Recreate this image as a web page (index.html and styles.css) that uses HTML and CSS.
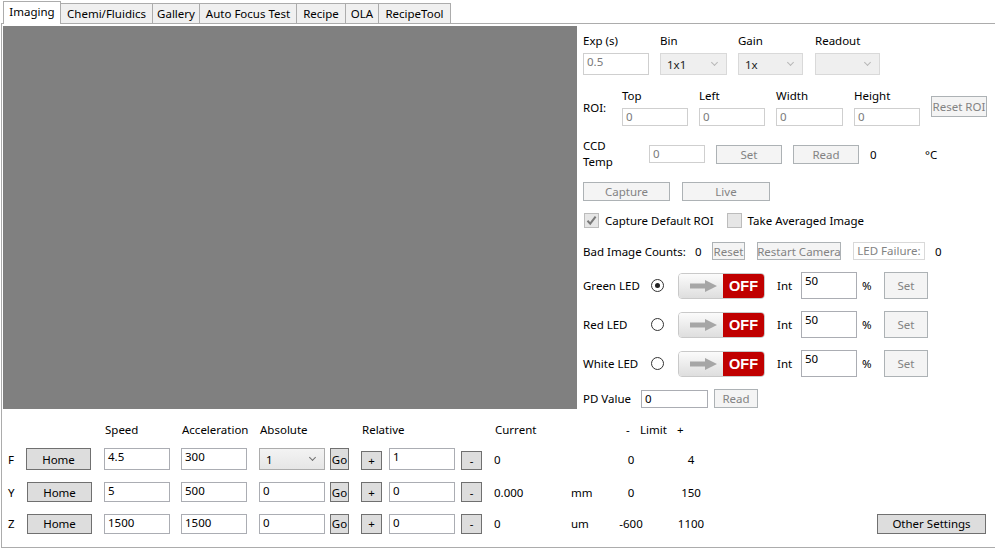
FILE: index.html
```html
<!DOCTYPE html>
<html>
<head>
<meta charset="utf-8">
<link rel="stylesheet" href="styles.css">
</head>
<body>
<div class="tabs">
  <div class="tab active w-img">Imaging</div>
  <div class="tab w-chem">Chemi/Fluidics</div>
  <div class="tab w-gal">Gallery</div>
  <div class="tab w-af">Auto Focus Test</div>
  <div class="tab w-rec">Recipe</div>
  <div class="tab w-ola">OLA</div>
  <div class="tab w-rt">RecipeTool</div>
</div>
<div class="frame">
  <div class="top">
    <div class="image"></div>
    <div class="panel">
      <div class="row r-lab1">
        <span class="c77">Exp (s)</span><span class="c78">Bin</span><span class="c77">Gain</span><span>Readout</span>
      </div>
      <div class="row r-ctl1">
        <div class="inp dis w66 c77m">0.5</div>
        <div class="combo w67 m11">1x1<span class="chev"></span></div>
        <div class="combo w65 m11">1x<span class="chev"></span></div>
        <div class="combo w65 m12"><span class="chev"></span></div>
      </div>
      <div class="row r-roi">
        <span class="roi-lab">ROI:</span>
        <div class="grp g77"><span class="glab">Top</span><div class="inp dis w66 h18">0</div></div>
        <div class="grp g77"><span class="glab">Left</span><div class="inp dis w66 h18">0</div></div>
        <div class="grp g78"><span class="glab">Width</span><div class="inp dis w67 h18">0</div></div>
        <div class="grp g77"><span class="glab">Height</span><div class="inp dis w66 h18">0</div></div>
        <div class="btn roi-btn">Reset ROI</div>
      </div>
      <div class="row r-ccd">
        <span class="ccd-lab">CCD<br>Temp</span>
        <div class="inp dis w56 h18">0</div>
        <div class="btn w66 h19 m11">Set</div>
        <div class="btn w66 h19 m11">Read</div>
        <span class="m11 w55">0</span>
        <span>°C</span>
      </div>
      <div class="row r-cap">
        <div class="btn w87 h19">Capture</div>
        <div class="btn w88 h19 m12">Live</div>
      </div>
      <div class="row r-chk">
        <span class="chk on"><svg width="13" height="13" viewBox="0 0 13 13"><path d="M2.5 6.8 L5.2 9.6 L10.6 2.6" fill="none" stroke="#7a7a7a" stroke-width="2"/></svg></span>
        <span class="chk-lab">Capture Default ROI</span>
        <span class="chk m12b"></span>
        <span class="chk-lab">Take Averaged Image</span>
      </div>
      <div class="row r-bad">
        <span class="w112">Bad Image Counts:</span>
        <span class="w17">0</span>
        <div class="btn w33 h18">Reset</div>
        <div class="btn w84 h18 m12">Restart Camera</div>
        <div class="ledf m12">LED Failure:</div>
        <span class="m10">0</span>
      </div>
      <div class="row r-led">
        <span class="w68">Green LED</span>
        <span class="radio on"></span>
        <div class="toggle">
          <div class="tg-l"><svg width="27" height="12" viewBox="0 0 27 12"><path d="M0 3.5h15V0l12 6-12 6V8.5H0z" fill="#a6a6a6"/></svg></div>
          <div class="tg-r">OFF</div>
        </div>
        <span class="int">Int</span>
        <div class="inp w56 h27">50</div>
        <span class="pct">%</span>
        <div class="btn w44 h27">Set</div>
      </div>
      <div class="row r-led">
        <span class="w68">Red LED</span>
        <span class="radio"></span>
        <div class="toggle">
          <div class="tg-l"><svg width="27" height="12" viewBox="0 0 27 12"><path d="M0 3.5h15V0l12 6-12 6V8.5H0z" fill="#a6a6a6"/></svg></div>
          <div class="tg-r">OFF</div>
        </div>
        <span class="int">Int</span>
        <div class="inp w56 h27">50</div>
        <span class="pct">%</span>
        <div class="btn w44 h27">Set</div>
      </div>
      <div class="row r-led">
        <span class="w68">White LED</span>
        <span class="radio"></span>
        <div class="toggle">
          <div class="tg-l"><svg width="27" height="12" viewBox="0 0 27 12"><path d="M0 3.5h15V0l12 6-12 6V8.5H0z" fill="#a6a6a6"/></svg></div>
          <div class="tg-r">OFF</div>
        </div>
        <span class="int">Int</span>
        <div class="inp w56 h27">50</div>
        <span class="pct">%</span>
        <div class="btn w44 h27">Set</div>
      </div>
      <div class="row r-pd">
        <span class="w58">PD Value</span>
        <div class="inp w67 h18">0</div>
        <div class="btn w44 h19 m6">Read</div>
      </div>
    </div>
  </div>
  <div class="bottom">
    <div class="brow bhead">
      <span class="hs1">Speed</span>
      <span class="hs2">Acceleration</span>
      <span class="hs3">Absolute</span>
      <span class="hs4">Relative</span>
      <span class="hs5">Current</span>
      <span class="hs6">-</span>
      <span class="hs7">Limit</span>
      <span>+</span>
    </div>
    <div class="brow b-f">
      <span class="ax">F</span>
      <div class="btn en w65">Home</div>
      <div class="inp w66 m13">4.5</div>
      <div class="inp w66 m11">300</div>
      <div class="combo en w66 m12">1<span class="chev dark"></span></div>
      <div class="btn en go">Go</div>
      <div class="btn en pm m12 h19">+</div>
      <div class="inp w66 m7">1</div>
      <div class="btn en pm m6 h19">-</div>
      <span class="cur">0</span>
      <span class="unit"></span>
      <span class="lim">0</span>
      <span class="lim2">4</span>
    </div>
    <div class="brow b-y">
      <span class="ax">Y</span>
      <div class="btn en w65 m1">Home</div>
      <div class="inp w66 m12">5</div>
      <div class="inp w66 m11">500</div>
      <div class="inp w66 m12">0</div>
      <div class="btn en go">Go</div>
      <div class="btn en pm m12">+</div>
      <div class="inp w66 m7">0</div>
      <div class="btn en pm m6">-</div>
      <span class="cur">0.000</span>
      <span class="unit">mm</span>
      <span class="lim">0</span>
      <span class="lim2">150</span>
    </div>
    <div class="brow b-z">
      <span class="ax">Z</span>
      <div class="btn en w65 m1">Home</div>
      <div class="inp w66 m12">1500</div>
      <div class="inp w66 m11">1500</div>
      <div class="inp w66 m12">0</div>
      <div class="btn en go">Go</div>
      <div class="btn en pm m12">+</div>
      <div class="inp w66 m7">0</div>
      <div class="btn en pm m6">-</div>
      <span class="cur">0</span>
      <span class="unit">um</span>
      <span class="lim">-600</span>
      <span class="lim2">1100</span>
      <div class="btn en other">Other Settings</div>
    </div>
  </div>
</div>
</body>
</html>
```
FILE: styles.css
```css
* { box-sizing: border-box; }
html, body { margin: 0; padding: 0; background: #fff; }
body {
  font-family: "Noto Sans", "Open Sans", sans-serif;
  font-size: 11.5px;
  color: #000;
  width: 995px;
  height: 549px;
  overflow: hidden;
}

/* tabs */
.tabs { display: flex; height: 23px; padding-left: 3px; align-items: flex-start; }
.tab {
  height: 20px; margin-top: 3px;
  background: #f0f0f0;
  border: 1px solid #acacac; border-bottom: none;
  border-left: none;
  text-align: center; line-height: 19px;
  white-space: nowrap;
}
.tab.active {
  position: relative; z-index: 2;
  margin-top: 1px; height: 23px;
  background: #fff; border-left: 1px solid #acacac;
  line-height: 20px;
}
.w-img { width: 58px; }
.w-chem { width: 92px; }
.w-gal { width: 47px; }
.w-af { width: 97px; }
.w-rec { width: 49px; }
.w-ola { width: 33px; }
.w-rt { width: 72px; }

.frame {
  margin-left: 1px; width: 995px; height: 525px;
  border: 1px solid #acacac; border-right-color: #f4f4f4;
}
.top { display: flex; }
.image {
  width: 574px; height: 383px; margin: 2px 0 0 1px;
  background: #808080; flex: none;
}
.panel { margin-left: 6px; display: flex; flex-direction: column; }
.row { display: flex; align-items: center; white-space: nowrap; }

.r-lab1 { margin-top: 8px; height: 16px; }
.c77 { width: 77px; }
.c78 { width: 78px; }
.r-ctl1 { margin-top: 5px; height: 22px; }

.inp {
  border: 1px solid #abadb3; background: #fff;
  padding: 0 3px; line-height: 16px; height: 22px;
  color: #000; flex: none; overflow: hidden;
}
.inp.dis { border-color: #cfcfcf; color: #7a7a7a; }
.w56 { width: 56px; } .w65 { width: 65px; } .w66 { width: 66px; } .w67 { width: 67px; }
.w33 { width: 33px; } .w44 { width: 44px; } .w84 { width: 84px; } .w87 { width: 87px; } .w88 { width: 88px; }
.h18 { height: 18px; } .h19 { height: 19px; } .h27 { height: 27px; }
.m1 { margin-left: 1px; } .m6 { margin-left: 6px; } .m7 { margin-left: 7px; } .m10 { margin-left: 10px; }
.m11 { margin-left: 11px; } .m12 { margin-left: 12px; } .m13 { margin-left: 13px; }

.combo {
  position: relative; height: 22px;
  background: #efefef; border: 1px solid #d9d9d9;
  padding-left: 6px; line-height: 21px; color: #222;
  flex: none;
}
.combo.en { background: linear-gradient(#f3f3f3, #e6e6e6); border-color: #acacac; color: #000; }
.chev {
  position: absolute; right: 9px; top: 6px;
  width: 5px; height: 5px;
  border-right: 1px solid #b8b8b8; border-bottom: 1px solid #b8b8b8;
  transform: rotate(45deg);
}
.chev.dark { border-color: #707070; }

.r-roi { margin-top: 13px; height: 39px; align-items: flex-start; }
.roi-lab { width: 39px; margin-top: 12px; line-height: 16px; }
.grp { display: flex; flex-direction: column; }
.g77 { width: 77px; } .g78 { width: 78px; }
.glab { line-height: 16px; height: 16px; margin-bottom: 4px; }
.roi-btn { width: 56px; height: 21px; margin-top: 8px; line-height: 19px; }

.btn {
  border: 1px solid #adb2b5; background: #f4f4f4; color: #838383;
  text-align: center; display: flex; align-items: center; justify-content: center;
  flex: none; white-space: nowrap; overflow: hidden;
}
.btn.en { border-color: #707070; background: #dddddd; color: #000; }

.r-ccd { margin-top: 11px; height: 32px; }
.ccd-lab { width: 66px; line-height: 16px; }
.w55 { width: 55px; }

.r-cap { margin-top: 12px; height: 19px; }

.r-chk { margin-top: 12px; height: 15px; }
.chk {
  width: 15px; height: 15px; margin-left: 1px;
  border: 1px solid #bcbcbc; background: #e6e6e6;
  display: flex; align-items: center; justify-content: center; flex: none;
}
.chk-lab { margin-left: 6px; }
.m12b { margin-left: 13px; }

.r-bad { margin-top: 14px; height: 18px; }
.w112 { width: 112px; }
.w17 { width: 17px; }
.ledf {
  width: 72px; height: 18px; border: 1px solid #d9d9d9; background: #fff;
  color: #838383; text-align: center; line-height: 16px;
}

.r-led { margin-top: 12px; height: 27px; }
.w68 { width: 68px; }
.radio {
  width: 13px; height: 13px; border-radius: 50%;
  border: 1px solid #333; background: #fff; position: relative; flex: none;
}
.radio.on::after {
  content: ""; position: absolute; left: 3px; top: 3px;
  width: 5px; height: 5px; border-radius: 50%; background: #222;
}
.toggle {
  margin-left: 14px; width: 87px; height: 26px;
  border: 1px solid #c9c9c9; border-radius: 4px; overflow: hidden;
  display: flex; flex: none;
}
.tg-l {
  width: 44px; background: linear-gradient(#fbfbfb, #dedede);
  display: flex; align-items: center; justify-content: center; padding-left: 4px;
}
.tg-r {
  flex: 1; background: #c00000; color: #fff;
  font-family: "Liberation Sans", Arial, sans-serif; font-weight: bold; font-size: 14.5px;
  display: flex; align-items: center; justify-content: center;
}
.int { margin-left: 12px; width: 24px; }
.pct { margin-left: 5px; width: 22px; }

.r-pd { margin-top: 12px; height: 19px; }
.w58 { width: 58px; }

/* bottom */
.bottom { padding-left: 1px; }
.brow { display: flex; align-items: center; white-space: nowrap; }
.bhead { margin-top: 12px; height: 16px; padding-left: 102px; }
.hs1 { width: 77px; } .hs2 { width: 78px; } .hs3 { width: 102px; } .hs4 { width: 133px; }
.hs5 { width: 131px; } .hs6 { width: 14px; } .hs7 { width: 37px; }
.b-f { margin-top: 11px; height: 22px; }
.b-y { margin-top: 12px; height: 20px; }
.b-y .inp, .b-y .btn, .b-z .inp, .b-z .btn { height: 20px; }
.b-f .btn.en.w65 { height: 22px; }
.b-z { margin-top: 11px; height: 21px; }
.ax { width: 23px; padding-left: 5px; }
.go { width: 19px; height: 22px; margin-left: 5px; }
.pm { width: 21px; }
.b-f .pm { margin-top: 3px; }
.cur { margin-left: 12px; width: 77px; }
.unit { width: 40px; }
.lim { width: 40px; text-align: center; }
.lim2 { width: 40px; margin-left: 20px; text-align: center; }
.other { width: 109px; height: 21px; margin-left: 166px; }
```
